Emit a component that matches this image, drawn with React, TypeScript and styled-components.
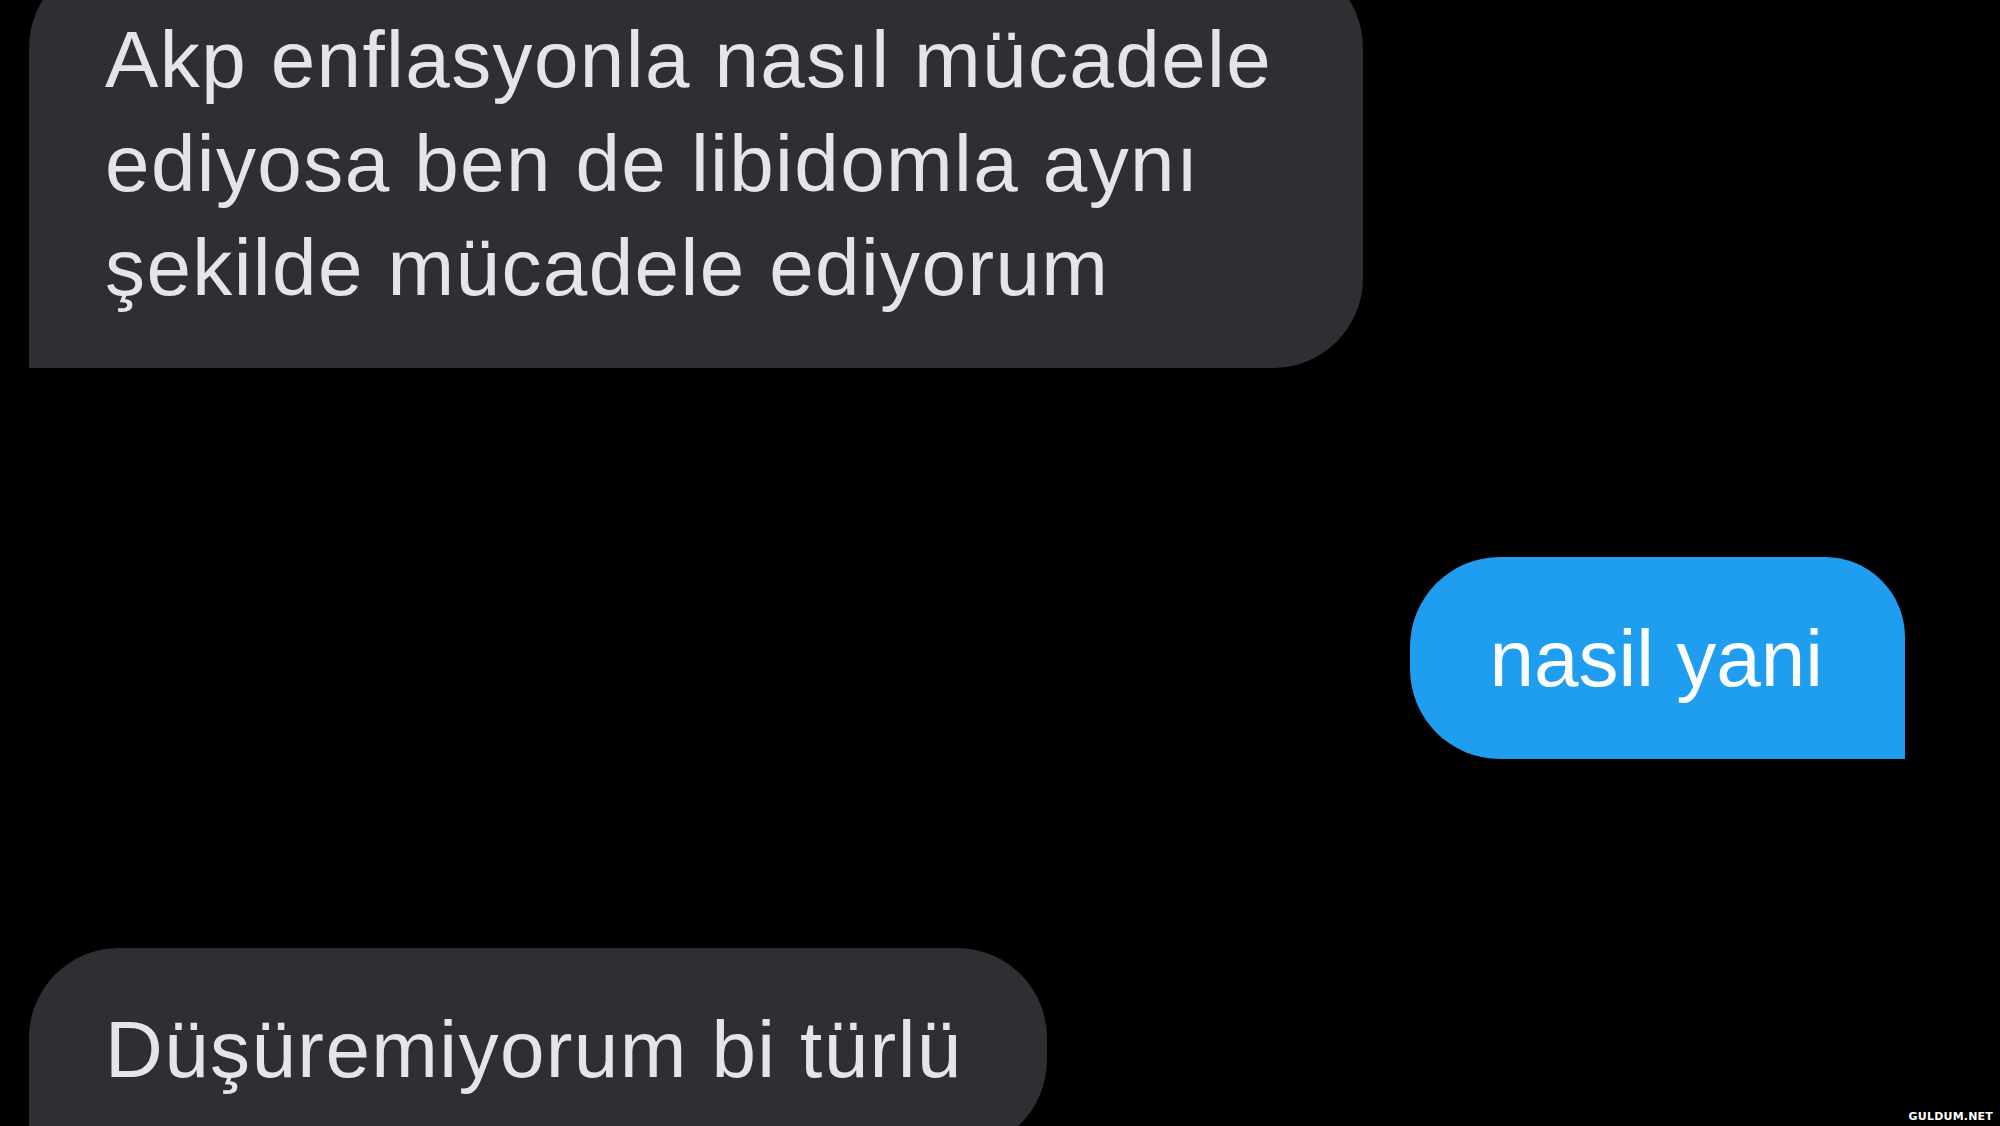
import React from 'react';
import styled, { createGlobalStyle } from 'styled-components';

const GlobalStyle = createGlobalStyle`
  html, body {
    margin: 0;
    padding: 0;
    background: #000;
  }
`;

const Thread = styled.div`
  position: relative;
  height: 1126px;
  overflow: hidden;
  background: #000;
  display: flex;
  flex-direction: column;
  gap: 189px;
  padding: 0 95px 0 29px;
  box-sizing: border-box;
  font-family: "Liberation Sans", Arial, sans-serif;
`;

const Row = styled.div<{ $mine?: boolean; $first?: boolean }>`
  display: flex;
  justify-content: ${(p) => (p.$mine ? 'flex-end' : 'flex-start')};
  margin-top: ${(p) => (p.$first ? '-42px' : '0')};
  flex-shrink: 0;
`;

const Bubble = styled.div<{ $mine?: boolean }>`
  box-sizing: border-box;
  width: fit-content;
  max-width: 1334px;
  padding: ${(p) => (p.$mine ? '50px 82px 48px 79px' : '50px 84px 48px 76px')};
  background: ${(p) => (p.$mine ? '#1f9ef0' : '#2d2f32')};
  color: ${(p) => (p.$mine ? '#fbfdff' : '#e4e5e7')};
  font-size: 80px;
  line-height: 104px;
  letter-spacing: ${(p) => (p.$mine ? '0' : '1.4px')};
  border-radius: ${(p) => (p.$mine ? '90px 80px 0 90px' : '90px 90px 90px 0')};
`;

const Watermark = styled.div`
  position: absolute;
  right: 7px;
  bottom: 3px;
  color: #fff;
  font-family: "DejaVu Sans", sans-serif;
  font-weight: bold;
  font-size: 11px;
  letter-spacing: 0.2px;
`;

const messages = [
  { mine: false, text: 'Akp enflasyonla nasıl mücadele ediyosa ben de libidomla aynı şekilde mücadele ediyorum' },
  { mine: true, text: 'nasil yani' },
  { mine: false, text: 'Düşüremiyorum bi türlü' },
];

export default function App() {
  return (
    <>
      <GlobalStyle />
      <Thread>
        {messages.map((m, i) => (
          <Row key={i} $mine={m.mine} $first={i === 0}>
            <Bubble $mine={m.mine}>{m.text}</Bubble>
          </Row>
        ))}
        <Watermark>GULDUM.NET</Watermark>
      </Thread>
    </>
  );
}
